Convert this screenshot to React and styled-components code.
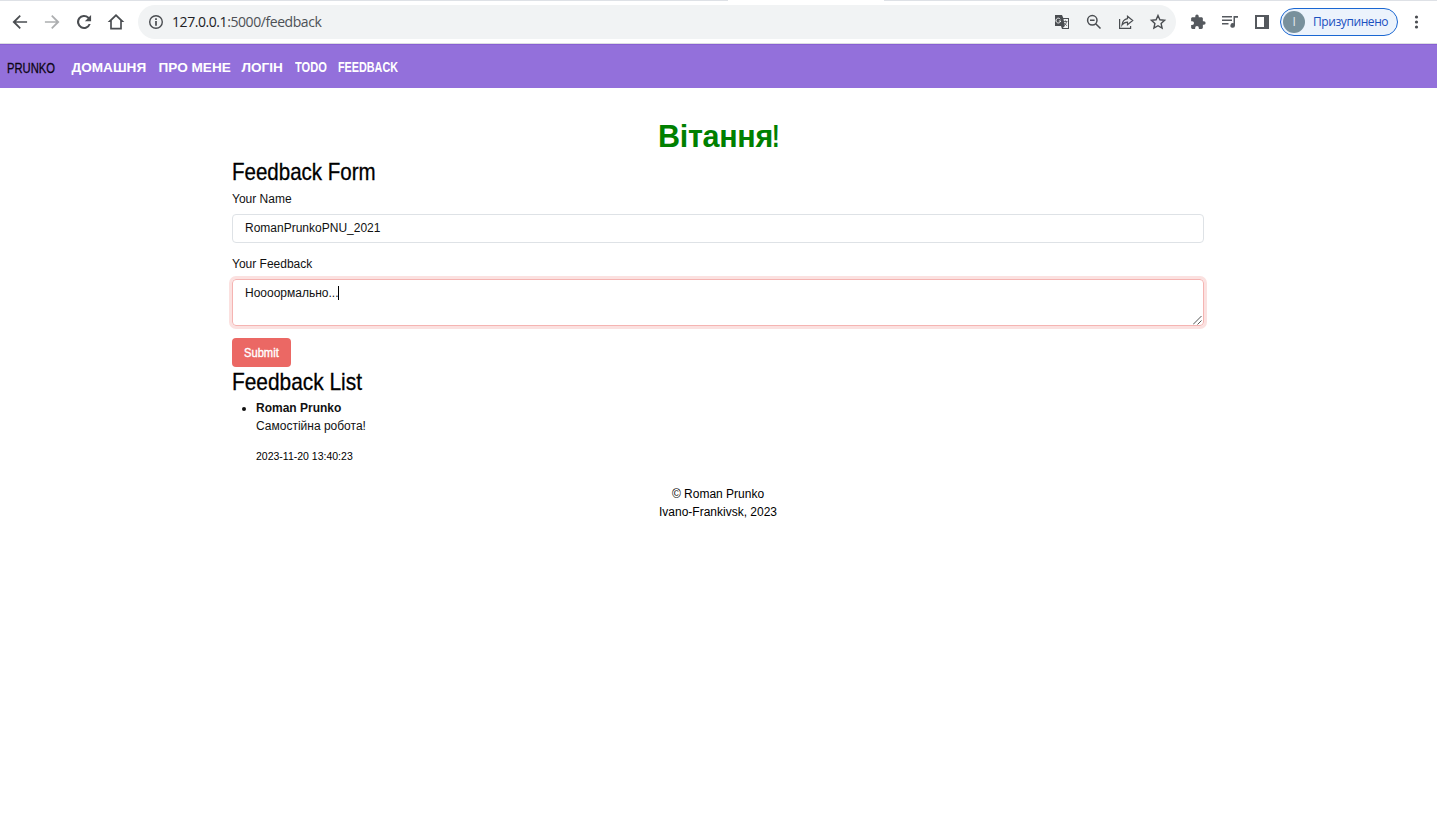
import React from "react";
import styled, { createGlobalStyle } from "styled-components";

const Global = createGlobalStyle`
  * { box-sizing: border-box; }
  body { margin: 0; background: #fff; color: #111; font: 12px/18px "Liberation Sans", Arial, sans-serif; }
  #root { height: 817px; overflow: hidden; }
`;

const Toolbar = styled.header`
  height: 44px;
  display: flex;
  align-items: center;
  padding: 1px 0 0;
  color: #4a4d51;
  border-bottom: 1px solid #dcdde2;
  background: linear-gradient(90deg, #dee1e6 728px, #fff 728px, #fff 884px, #dee1e6 884px) top / 100% 1px no-repeat #fff;
`;
const NavIcons = styled.div`
  display: flex;
  gap: 12px;
  padding-left: 10px;
  width: 138px;
`;
const Icon = styled.svg`
  width: ${(p) => p.$size || 20}px;
  height: ${(p) => p.$size || 20}px;
  flex: none;
  display: block;
  fill: currentColor;
  opacity: ${(p) => (p.$dim ? 0.45 : 1)};
`;
const Address = styled.div`
  width: 1038px;
  height: 34px;
  border-radius: 17px;
  background: #f1f3f4;
  display: flex;
  align-items: center;
  padding: 0 9px 0 10px;
`;
const Url = styled.span`
  flex: 1;
  margin-left: 8px;
  font: 14px/20px "Open Sans", "Noto Sans", sans-serif;
  letter-spacing: -0.43px;
  color: #4d5156;
  b { font-weight: 400; color: #202124; }
`;
const AddressIcons = styled.div`
  display: flex;
  gap: 14px;
`;
const Extensions = styled.div`
  display: flex;
  gap: 14px;
  margin-left: 13px;
  color: #55595e;
`;
const Profile = styled.div`
  display: flex;
  align-items: center;
  width: 118px;
  height: 28px;
  margin: 0 9px 0 9px;
  padding-left: 2px;
  border: 1px solid #1a67d2;
  border-radius: 14px;
  background: #ecf3fc;
  color: #1a50c0;
  white-space: nowrap;
  font: 12px/18px "Open Sans", "Noto Sans", sans-serif;
  letter-spacing: -0.42px;
`;
const Avatar = styled.span`
  width: 22px;
  height: 22px;
  margin-right: 8px;
  border-radius: 50%;
  background: #78909c;
  color: #e4eaed;
  text-align: center;
  line-height: 22px;
`;

const Navbar = styled.nav`
  height: 44px;
  display: flex;
  align-items: center;
  padding: 1px 0 0 7px;
  background: #9370db;
  border-top: 1px solid #8860d2;
`;
const Narrow = styled.span`
  display: inline-block;
  white-space: nowrap;
  transform: scaleX(${(p) => p.$scale});
  transform-origin: left;
`;
const Brand = styled.a`
  width: 64.5px;
  font-size: 14.5px;
  line-height: 20px;
  padding-top: 1px;
  color: #0d0614;
  -webkit-text-stroke: 0.3px;
`;
const NavLink = styled.a`
  width: ${(p) => p.$width}px;
  padding-top: 1px;
  white-space: nowrap;
  font-size: 13.6px;
  line-height: 20px;
  font-weight: 700;
  color: #fff;
`;
const NarrowLink = styled(NavLink)`
  padding-top: 0;
  font-size: 14.5px;
`;

const Page = styled.main`
  width: 972px;
  margin: 0 0 0 232px;
  padding-top: 29px;
`;
const Greeting = styled.h1`
  margin: 0;
  height: 41px;
  font-size: 30.5px;
  line-height: 38px;
  font-weight: 700;
  letter-spacing: -0.3px;
  text-align: center;
  color: #008000;
`;
const Exclamation = styled.span`
  display: inline-block;
  width: 6px;
  margin-left: -1px;
  transform: scaleX(0.75);
  transform-origin: left;
`;
const Heading = styled.h2`
  margin: 0;
  height: 32px;
  padding-top: ${(p) => p.$top || 0}px;
  font-size: 24px;
  line-height: 28px;
  font-weight: 400;
  color: #000;
  -webkit-text-stroke: 0.3px;
`;
const Label = styled.label`
  display: block;
  margin-bottom: 6px;
`;
const Field = styled.div`
  height: 29px;
  padding: 4px 12px;
  border: 1px solid #dee2e6;
  border-radius: 4px;
  margin-bottom: 12px;
`;
const TextField = styled(Field)`
  height: 47px;
  border-color: #f5b4b2;
  box-shadow: 0 0 0 3px #fbe1e0;
  display: flex;
  justify-content: space-between;
  padding-right: 1px;
  margin-bottom: 12px;
`;
const Caret = styled.i`
  display: inline-block;
  width: 1px;
  height: 14px;
  margin-left: -1px;
  background: #000;
  vertical-align: -3px;
`;
const Grip = styled.svg`
  width: 9px;
  height: 9px;
  align-self: flex-end;
  margin-bottom: -4px;
  stroke: #555;
  fill: none;
`;
const Submit = styled.button`
  display: block;
  width: 59px;
  height: 29px;
  padding: 1px 0 0 12px;
  border: 0;
  border-radius: 4px;
  background: #eb6864;
  color: #fff;
  font: 12px/28px "Liberation Sans", Arial, sans-serif;
  text-align: left;
  -webkit-text-stroke: 0.35px;
`;
const List = styled.ul`
  margin: 0;
  padding-left: 24px;
`;
const Author = styled.strong`
  display: block;
`;
const Stamp = styled.small`
  display: block;
  margin-top: 12px;
  font-size: 10.5px;
  line-height: 18px;
  color: #000;
`;
const Footer = styled.footer`
  margin-top: 20px;
  text-align: center;
  color: #000;
`;

export default function App() {
  return (
    <>
      <Global />
      <Toolbar>
        <NavIcons>
          <Icon viewBox="0 0 24 24"><path d="M20.5 11H7.2l5.8-5.8L11.6 3.6 3 12l8.6 8.4 1.4-1.5L7.2 13h13.3z" /></Icon>
          <Icon viewBox="0 0 24 24" $dim><path d="M3.5 11h13.3L11 5.2l1.4-1.6L21 12l-8.6 8.4-1.4-1.5 5.8-5.9H3.5z" /></Icon>
          <Icon viewBox="0 0 24 24"><path d="M18 6A8.4 8.4 0 1 0 20 14.5h-2.4A6 6 0 1 1 16.4 7.700L13 11h7.500V3.500z" /></Icon>
          <Icon viewBox="0 0 24 24"><path d="M12 2.500 2 12h3v9h14v-9h3zM12 5.400l5 4.800V19H7v-8.800z" fillRule="evenodd" /></Icon>
        </NavIcons>
        <Address>
          <Icon viewBox="0 0 24 24" $size={16}><path fillRule="evenodd" d="M12 1.500a10.500 10.500 0 1 0 0 21 10.500 10.500 0 0 0 0-21zm0 2.100a8.400 8.400 0 1 1 0 16.800 8.400 8.400 0 0 1 0-16.800zM10.700 6.500h2.600V9h-2.600zm0 4h2.600v7h-2.600z" /></Icon>
          <Url><b>127.0.0.1</b>:5000/feedback</Url>
          <AddressIcons>
            <Icon viewBox="0 0 18 18" $size={18}>
              <path d="M2 2h7l1.300 3H16v11H9l-1-3H2z" />
              <path d="M10.500 6H15v9H9.800l2-2z" fill="#f1f3f4" />
              <path d="M10.400 8.500h4M12.400 7.400v1.100M13.700 8.500c-.4 1.800-1.300 3-2.500 4M11.300 10l2.500 2.800" stroke="currentColor" fill="none" strokeWidth=".8" />
              <path d="M7.300 6.200A2.400 2.400 0 1 0 7.700 8H5.800" stroke="#f1f3f4" fill="none" />
            </Icon>
            <Icon viewBox="0 0 18 18" $size={18}><g fill="none" stroke="currentColor" strokeWidth="1.500"><circle cx="7.300" cy="7.300" r="4.700" /><path d="m10.700 10.700 4.800 4.800M5 7.300h4.600" /></g></Icon>
            <Icon viewBox="0 0 18 18" $size={18}><g fill="none" stroke="currentColor" strokeWidth="1.200"><path d="M2.600 6v9.400h11V13" /><path d="M10.500 3.200 15.700 7.500l-5.200 4.200V9.200C8 9.200 6.500 10 5 12c.4-3.400 2.100-5.700 5.500-6.300z" /></g></Icon>
            <Icon viewBox="0 0 18 18" $size={18}><path d="m9 2.500 1.900 4.300 4.700.5-3.500 3.200 1 4.600L9 12.700l-4.100 2.400 1-4.600-3.500-3.200 4.700-.5z" fill="none" stroke="currentColor" strokeWidth="1.400" /></Icon>
          </AddressIcons>
        </Address>
        <Extensions>
          <Icon viewBox="0 0 24 24" $size={18}><path transform="translate(1 1) scale(.92)" d="M20.500 11H19V7c0-1.100-.9-2-2-2h-4V3.500a2.500 2.500 0 0 0-5 0V5H4c-1.100 0-2 .9-2 2v3.800h1.500a2.700 2.700 0 0 1 0 5.400H2V20c0 1.100.9 2 2 2h3.800v-1.500a2.700 2.700 0 0 1 5.400 0V22H17c1.100 0 2-.9 2-2v-4h1.500a2.500 2.500 0 0 0 0-5z" /></Icon>
          <Icon viewBox="0 0 18 18" $size={18}><path d="M1 3h10v1.500H1zM1 6.500h10V8H1zM1 10h6.500v1.500H1zM12.500 3H17v1.700h-3v7.800a2.300 2.300 0 1 1-1.500-2.200z" /></Icon>
          <Icon viewBox="0 0 18 18" $size={18}><path fillRule="evenodd" d="M2 2h14v14H2zM4 4v10h7V4z" /></Icon>
        </Extensions>
        <Profile><Avatar>І</Avatar><span>Призупинено</span></Profile>
        <Icon viewBox="0 0 20 20"><circle cx="9.500" cy="5" r="1.600" /><circle cx="9.500" cy="10" r="1.600" /><circle cx="9.500" cy="15" r="1.600" /></Icon>
      </Toolbar>

      <Navbar>
        <Brand><Narrow $scale={0.775}>PRUNKO</Narrow></Brand>
        <NavLink $width={87}>ДОМАШНЯ</NavLink>
        <NavLink $width={83}>ПРО МЕНЕ</NavLink>
        <NavLink $width={53.5}>ЛОГІН</NavLink>
        <NarrowLink $width={43}><Narrow $scale={0.765}>TODO</Narrow></NarrowLink>
        <NarrowLink $width={62}><Narrow $scale={0.745}>FEEDBACK</Narrow></NarrowLink>
      </Navbar>

      <Page>
        <Greeting>Вітання<Exclamation>!</Exclamation></Greeting>
        <Heading><Narrow $scale={0.855}>Feedback Form</Narrow></Heading>
        <Label>Your Name</Label>
        <Field>RomanPrunkoPNU_2021</Field>
        <Label>Your Feedback</Label>
        <TextField>
          <span>Ноооормально...<Caret /></span>
          <Grip viewBox="0 0 9 9"><path d="M0 8.500 8.500 0M4.500 8.500l4-4" /></Grip>
        </TextField>
        <Submit><Narrow $scale={0.93}>Submit</Narrow></Submit>
        <Heading $top={1}><Narrow $scale={0.87}>Feedback List</Narrow></Heading>
        <List>
          <li>
            <Author>Roman Prunko</Author>
            Самостійна робота!
            <Stamp>2023-11-20 13:40:23</Stamp>
          </li>
        </List>
        <Footer>© Roman Prunko<br />Ivano-Frankivsk, 2023</Footer>
      </Page>
    </>
  );
}
